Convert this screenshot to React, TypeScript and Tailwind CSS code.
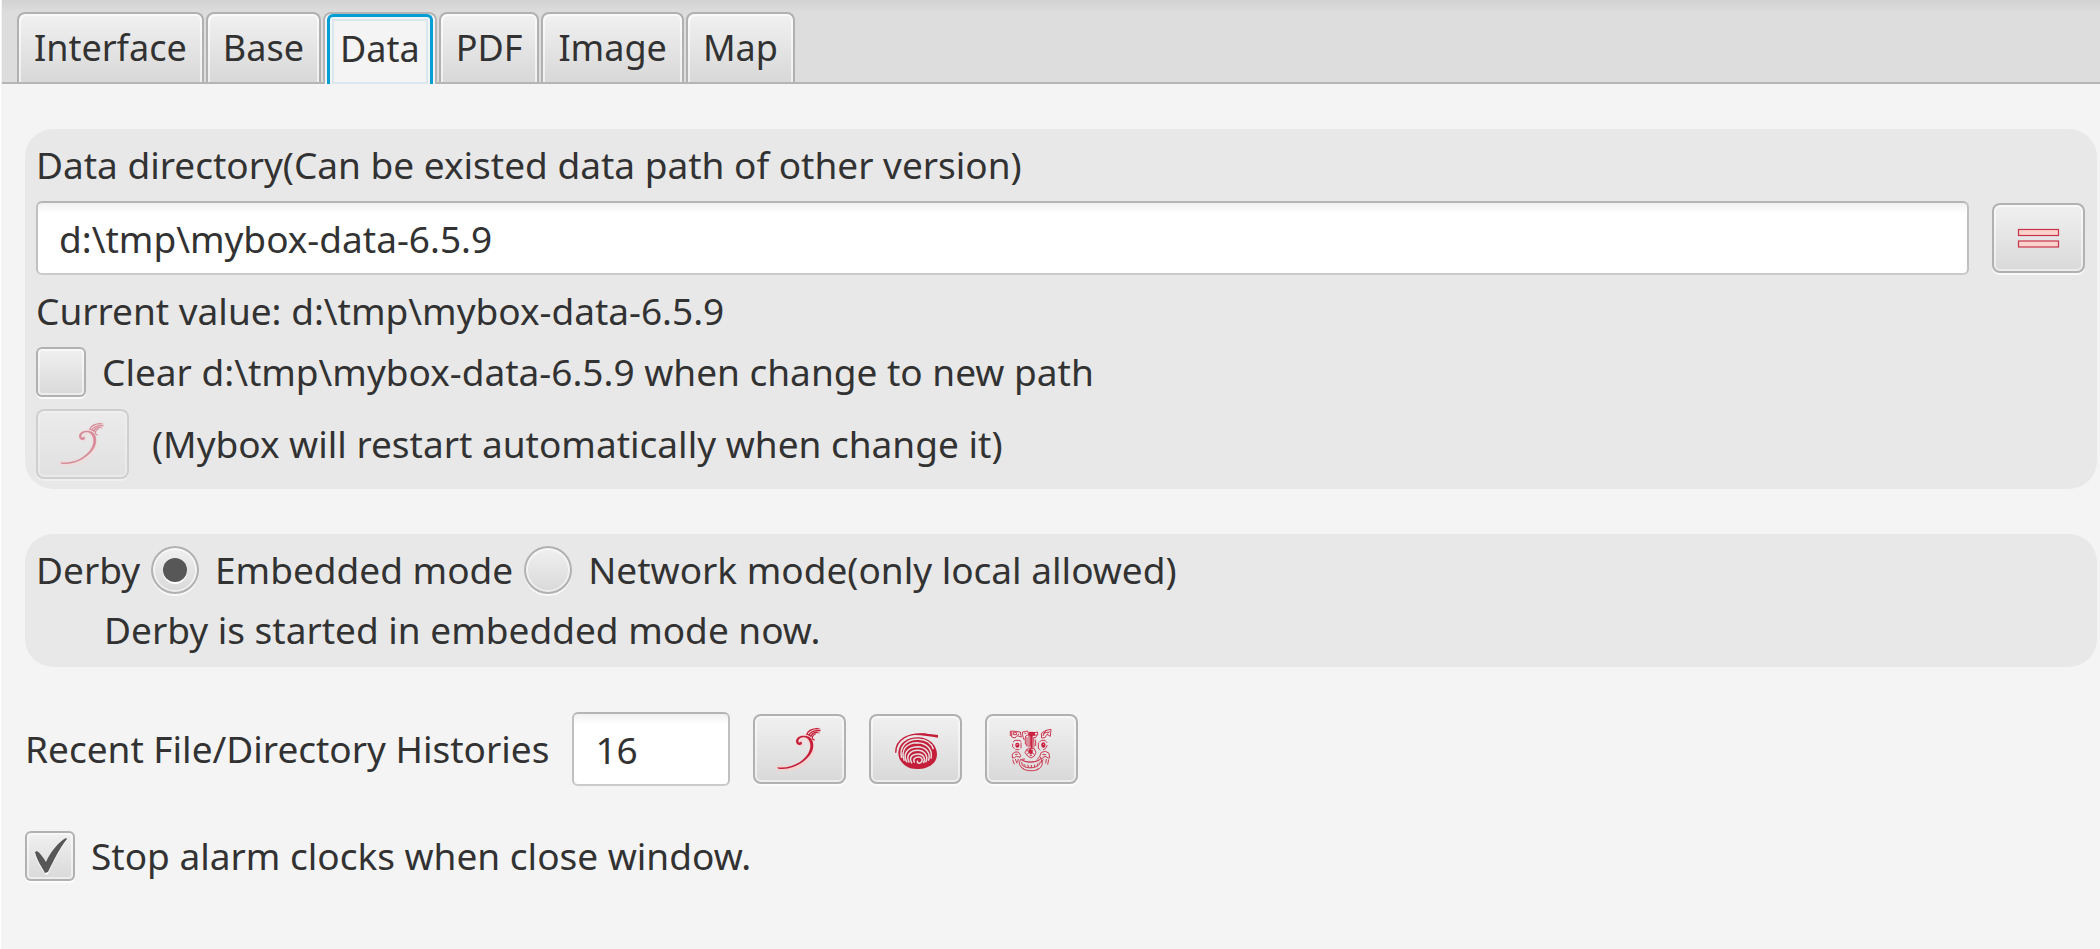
import React, { useState } from "react";
import type { ReactNode } from "react";

const TABS = ["Interface", "Base", "Data", "PDF", "Image", "Map"];

const RAISED =
  "bg-linear-to-b from-[#f1f1f1] to-[#d8d8d8] shadow-[inset_0_0_0_2px_#b1b1b1,inset_0_0_0_4px_rgba(255,255,255,0.5),0_2px_0_rgba(255,255,255,0.75)]";

const FIELD =
  "h-[74px] rounded-md border-2 border-[#c0c0c0] border-t-[#b5b5b5] border-b-[#cbcbcb] bg-linear-to-b from-[#f1f1f1] to-white to-15% px-[21px] outline-none";

function IconButton({ label, disabled, children }: { label: string; disabled?: boolean; children: ReactNode }) {
  return (
    <button
      type="button"
      aria-label={label}
      disabled={disabled}
      className={`${RAISED} h-[70px] w-[93px] shrink-0 rounded-lg disabled:opacity-45`}
    >
      {children}
    </button>
  );
}

function EqualsIcon() {
  return (
    <svg viewBox="0 0 93 70" className="block size-full">
      <g fill="#fcd3cc" stroke="#c8324c" strokeWidth="1.2">
        <rect x="26.5" y="26.5" width="40" height="6" />
        <rect x="26.5" y="38" width="40" height="6" />
      </g>
    </svg>
  );
}

function FeatherIcon() {
  return (
    <svg viewBox="36 42 279 210" className="block size-full" fill="none" strokeLinecap="round">
      <path
        d="M180 132C168 130 168 114 186 112C206 111 214 128 212 150C207 174 180 202 140 205L112 204M200 104L230 90"
        stroke="#fbcfcb"
        strokeWidth="16"
        opacity=".6"
      />
      <path
        d="M109 202C150 206 181 188 199 164C210 149 212 128 200 116C188 108 174 113 172 122C172 129 178 129 181 124L183 132C176 139 165 134 165 123C166 108 188 103 204 110C221 120 221 148 205 167C184 193 148 211 112 206Z"
        fill="#c41e3a"
      />
      <path d="M197 104C201 92 213 86 231 86M204 106C208 96 219 91 237 92M210 110C211 102 218 97 229 97M214 116C214 108 217 104 223 102M214 116L220 120M200 103L209 108" stroke="#c41e3a" strokeWidth="3.5" />
      <path d="M225 86L237 87M228 98L235 99" stroke="#c41e3a" strokeWidth="2" />
    </svg>
  );
}

function SpiralIcon() {
  return (
    <svg viewBox="39 42 279 210" className="block size-full" fill="none">
      <path d="M119 158C119 116 160 98 205 102L245 109" stroke="#c41e3a" strokeWidth="4" />
      <path d="M168 103C195 99 220 102 246 105V113C222 109 195 104 168 105Z" fill="#c41e3a" />
      <path
        d="M127 156C130 128 155 111 188 112C222 114 243 137 243 164C242 184 230 196 208 204C195 208 176 208 163 205C138 194 126 178 127 156Z"
        fill="#c41e3a"
      />
      <g stroke="#e6e0e1" strokeWidth="4.5">
        <path d="M137 174C128 140 152 117 187 118C211 119 227 131 232 148" />
        <path d="M145 182C133 152 150 128 184 128C212 129 231 148 225 176" />
        <path d="M153 187C139 164 153 141 184 140C210 140 226 160 217 182" />
        <path d="M160 188C148 168 162 151 185 151C207 151 218 170 209 187" />
        <path d="M168 190C157 173 168 162 187 162C203 162 210 177 202 189" />
        <path d="M176 188C169 178 177 171 188 171C197 171 203 180 194 188C188 192 182 187 185 182" />
      </g>
    </svg>
  );
}

function MaskIcon() {
  return (
    <svg viewBox="42 42 279 210" className="block size-full" fill="none" stroke="#cb2b47" strokeWidth="2.8">
      <path d="M118 92L118 108M122 93L148 96L151 111L138 107L132 114L122 111ZM127 98H137V104H127ZM143 101V105M154 96L170 93L173 104L164 108V116L158 118L155 106ZM160 99L166 101" />
      <path d="M240 88L238 109L228 103L222 113L212 114L211 100L225 91ZM216 108L220 99L232 96M230 101L236 94M216 103L226 91" />
      <path d="M174 97H187V105H198L194 113L188 112L189 142M174 97V143M178 105V140M191 98L200 96V106M168 112V140M194 119V138M163 118V132L168 136" />
      <path d="M175 96H192V107H185V145H179V109H174Z" fill="#c9213f" stroke="none" />
      <path d="M168 147L162 158L170 168L180 174L190 168L195 157L189 145ZM167 151L177 155L187 150M169 162L175 157M182 157L189 163M176 166H183" />
      <path d="M178 143L186 156L180 164L171 156Z" fill="#c9213f" stroke="none" />
      <path d="M126 126L132 121H144L151 124M125 131V140L130 146M150 128V145M145 149H133M205 126L212 121H222L228 128M202 128V145L208 150M229 135L224 145L216 150" />
      <rect x="133" y="128" width="12" height="15" rx="6" fill="#c9213f" stroke="none" />
      <rect x="211" y="127" width="12" height="16" rx="6" fill="#c9213f" stroke="none" />
      <path d="M137 134H140M217 133H219" stroke="#efdfe1" strokeWidth="3" />
      <path d="M124 174V162L132 156H142L149 166L147 172L137 169L130 173ZM132 163H140M125 179L130 193M133 177L138 190M142 177L140 187" />
      <path d="M236 174L234 160L224 154L211 157L206 169L212 176L222 169L232 174ZM214 164H225M233 178L230 194M226 177L224 190M217 178L212 188" />
      <path d="M149 178C160 188 200 190 210 175L214 192C210 208 194 213 178 212C160 212 146 203 145 188ZM152 186L154 196C166 207 196 206 206 192L208 184M158 192L164 199M170 194L173 203M181 195V204M191 194L190 202M201 190L198 199M152 178L162 177M198 179L206 170" />
      <path d="M155 181C170 190 194 188 206 178M150 201L160 208M204 204L196 210" strokeWidth="2" />
    </svg>
  );
}

function CheckBox({ id, label, checked, onChange }: { id: string; label: string; checked: boolean; onChange: () => void }) {
  return (
    <div className="flex items-center gap-4">
      <span className="relative size-[50px] shrink-0">
        <input
          id={id}
          type="checkbox"
          checked={checked}
          onChange={onChange}
          className={`${RAISED} block size-full appearance-none rounded-md`}
        />
        {checked && (
          <svg viewBox="0 0 50 50" className="pointer-events-none absolute inset-0">
            <path d="M10 23L12 22C15 23 18 27 21 33C26 23 33 12 41 8L42 9C34 19 29 30 23 43L21 44C17 38 12 32 10 23Z" fill="#fff" />
            <path d="M10 21L12 20C15 22 18 26 21 31C25 22 33 11 41 7L42 8C34 18 29 29 23 41L20 42C17 36 12 30 10 21Z" fill="#575757" />
          </svg>
        )}
      </span>
      <label htmlFor={id}>{label}</label>
    </div>
  );
}

function Radio({ id, label, checked, onChange }: { id: string; label: string; checked: boolean; onChange: () => void }) {
  return (
    <div className="flex items-center gap-4">
      <span className="relative size-12 shrink-0">
        <input
          id={id}
          name="derby"
          type="radio"
          checked={checked}
          onChange={onChange}
          className={`${RAISED} block size-full appearance-none rounded-full`}
        />
        {checked && (
          <span className="pointer-events-none absolute inset-3 rounded-full bg-[#575757] shadow-[0_2px_0_#fff]" />
        )}
      </span>
      <label htmlFor={id}>{label}</label>
    </div>
  );
}

export default function App() {
  const [tab, setTab] = useState("Data");
  const [path, setPath] = useState("d:\\tmp\\mybox-data-6.5.9");
  const [count, setCount] = useState("16");
  const [clear, setClear] = useState(false);
  const [stop, setStop] = useState(true);
  const [mode, setMode] = useState("embedded");

  return (
    <div className="min-h-screen border-l border-white bg-[#f4f4f4] font-['Noto_Sans',sans-serif] text-[37px] leading-[48px] whitespace-nowrap text-[#323232]">
      <div
        role="tablist"
        className="ml-px flex h-[84px] items-end gap-0.5 border-b-2 border-[#b5b5b5] bg-linear-to-b from-[#d2d2d2] to-[#dddddd] to-15% pl-[15px] text-[36px]"
      >
        {TABS.map((name) => (
          <button
            key={name}
            type="button"
            role="tab"
            aria-selected={name === tab}
            onClick={() => setTab(name)}
            className={
              name === tab
                ? "-mb-0.5 h-[72px] rounded-t-lg border-2 border-b-0 border-[#b5b5b5] bg-[#f4f4f4]"
                : "h-[70px] rounded-t-lg border-2 border-b-0 border-[#b1b1b1] bg-linear-to-b from-[#f1f1f1] to-[#d8d8d8] px-[15px] shadow-[inset_2px_2px_0_rgba(255,255,255,0.6),inset_-2px_0_0_rgba(255,255,255,0.6)]"
            }
          >
            {name === tab ? (
              <span className="mx-0.5 flex h-[70px] items-center rounded-t-md border-[3px] border-b-0 border-[#039ed3] p-0.5 pb-0">
                <span className="flex h-full items-center px-2 pb-1.5 shadow-[inset_0_0_0_2px_#d9e8ef]">{name}</span>
              </span>
            ) : (
              name
            )}
          </button>
        ))}
      </div>

      <main className="flex flex-col gap-[45px] pt-[45px] pr-[3px] pl-6">
        <section className="flex flex-col gap-3 rounded-[28px] bg-[#e8e8e8] pt-3 pr-3 pb-2.5 pl-[11px]">
          <label htmlFor="path">Data directory(Can be existed data path of other version)</label>
          <div className="flex items-center gap-[23px]">
            <input id="path" value={path} onChange={(e) => setPath(e.target.value)} className={`${FIELD} min-w-0 flex-1`} />
            <IconButton label="Select directory">
              <EqualsIcon />
            </IconButton>
          </div>
          <p>Current value: d:\tmp\mybox-data-6.5.9</p>
          <CheckBox
            id="clear"
            label="Clear d:\tmp\mybox-data-6.5.9 when change to new path"
            checked={clear}
            onChange={() => setClear(!clear)}
          />
          <div className="flex items-center gap-[23px]">
            <IconButton label="Apply directory" disabled>
              <FeatherIcon />
            </IconButton>
            <span>(Mybox will restart automatically when change it)</span>
          </div>
        </section>

        <section className="flex flex-col gap-3 rounded-[28px] bg-[#e8e8e8] pt-3 pr-3 pb-[13px] pl-[11px]">
          <div className="flex items-center gap-[11px]">
            <span>Derby</span>
            <Radio id="embedded" label="Embedded mode" checked={mode === "embedded"} onChange={() => setMode("embedded")} />
            <Radio
              id="network"
              label="Network mode(only local allowed)"
              checked={mode === "network"}
              onChange={() => setMode("network")}
            />
          </div>
          <p className="pl-[68px]">Derby is started in embedded mode now.</p>
        </section>

        <div className="flex items-center gap-[23px]">
          <label htmlFor="count">Recent File/Directory Histories</label>
          <input id="count" value={count} onChange={(e) => setCount(e.target.value)} className={`${FIELD} w-[158px]`} />
          <IconButton label="Apply">
            <FeatherIcon />
          </IconButton>
          <IconButton label="Clear histories">
            <SpiralIcon />
          </IconButton>
          <IconButton label="No history">
            <MaskIcon />
          </IconButton>
        </div>

        <CheckBox id="stop" label="Stop alarm clocks when close window." checked={stop} onChange={() => setStop(!stop)} />
      </main>
    </div>
  );
}
